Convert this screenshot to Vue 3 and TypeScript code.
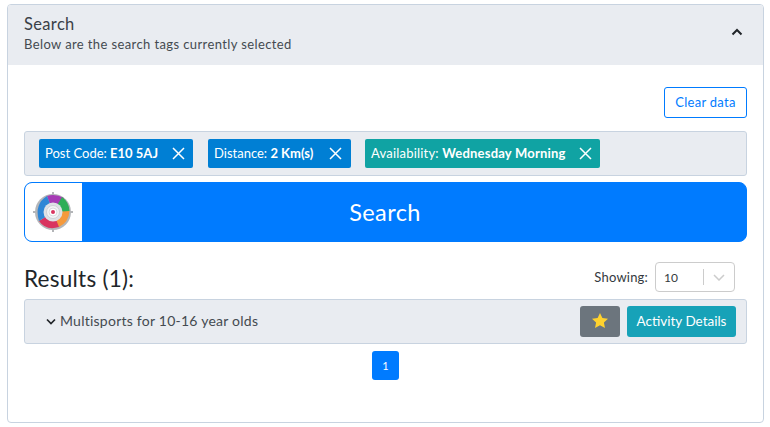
<script setup lang="ts">
interface Tag { label: string; value: string; kind: string }
const tags: Tag[] = [
  { label: 'Post Code:', value: 'E10 5AJ', kind: 'blue' },
  { label: 'Distance:', value: '2 Km(s)', kind: 'blue' },
  { label: 'Availability:', value: 'Wednesday Morning', kind: 'teal' },
]
</script>

<template>
  <div class="page">
    <section class="card">
      <header class="card-head">
        <div>
          <div class="title">Search</div>
          <div class="sub">Below are the search tags currently selected</div>
        </div>
        <svg class="chev-up" width="12" height="8" viewBox="0 0 12 8"><path d="M1.5 6.5 6 2l4.5 4.5" fill="none" stroke="#212529" stroke-width="2"/></svg>
      </header>
      <div class="card-body">
        <div class="actions"><button class="clear">Clear data</button></div>
        <div class="tags">
          <span v-for="t in tags" :key="t.label" class="tag" :class="t.kind">
            <span class="tag-text">{{ t.label }} <b>{{ t.value }}</b></span>
            <svg width="13" height="13" viewBox="0 0 13 13"><path d="M1 1l11 11M12 1 1 12" stroke="#fff" stroke-width="1.5" fill="none"/></svg>
          </span>
        </div>
        <button class="search">
          <span class="logo">
            <svg width="40" height="40" viewBox="0 0 40 40">
              <path d="M20 0v3M20 37v3M0 20h3M37 20h3" stroke="#9a9da1" stroke-width="1.500"/>
              <circle cx="20" cy="20" r="18" fill="#b4b6b9"/>
              <path d="M20 20 14 4Q22 1 31 6L26 18Z" fill="#a63bb5"/>
              <path d="M20 20 29 5Q36 10 36.500 19L24 24Z" fill="#2fae57"/>
              <path d="M20 20 36.500 19Q36 30 26 35L20 28Z" fill="#f59a3c"/>
              <path d="M20 20 26 35Q13 39 6 29L14 24Z" fill="#d9345f"/>
              <path d="M20 20 6 29Q1 12 14 4Z" fill="#2f86d6"/>
              <circle cx="20" cy="20" r="9.500" fill="#dfe1e6"/>
              <circle cx="20" cy="20" r="6.500" fill="#f3f4f6" stroke="#cfd1d5"/>
              <circle cx="20" cy="20" r="4" fill="#fff" stroke="#d8dade"/>
              <circle cx="20" cy="20" r="2" fill="#d9345f"/>
            </svg>
          </span>
          <span class="search-label">Search</span>
        </button>
        <div class="results-head">
          <h2>Results (1):</h2>
          <div class="showing">
            <span>Showing:</span>
            <div class="select">
              <span class="select-val">10</span>
              <i class="sep"></i>
              <svg width="12" height="7" viewBox="0 0 12 7"><path d="M1 1l5 5 5-5" fill="none" stroke="#ccc" stroke-width="1.500"/></svg>
            </div>
          </div>
        </div>
        <div class="row">
          <div class="row-name">
            <svg width="10" height="7" viewBox="0 0 10 7"><path d="M1 1.500 5 5.500l4-4" fill="none" stroke="#212529" stroke-width="1.700"/></svg>
            <span>Multisports for 10-16 year olds</span>
          </div>
          <div class="row-btns">
            <button class="star">
              <svg width="16" height="15" viewBox="0 0 16 15"><path d="M8 0l2.400 5 5.600.7-4.100 3.800 1.100 5.500L8 12.300 3 15l1.100-5.500L0 5.700 5.600 5z" fill="#ffd22e"/></svg>
            </button>
            <button class="details">Activity Details</button>
          </div>
        </div>
        <div class="pager"><span class="page-btn">1</span></div>
      </div>
    </section>
  </div>
</template>

<style>
html, body { margin: 0; background: #fff; }
</style>

<style scoped>
.page { width: 770px; height: 427px; box-sizing: border-box; padding: 4px 6px 4px 7px; font-family: "Lato", "Open Sans", sans-serif; color: #343a40; overflow: hidden; }
.card { box-sizing: border-box; height: 419px; border: 1px solid #c8d3e0; border-radius: 4px; overflow: hidden; background: #fff; }
.card-head { height: 60px; box-sizing: border-box; background: #e9ecf1; padding: 10px 20px 0 16px; display: flex; justify-content: space-between; align-items: flex-start; }
.title { font-size: 16.500px; line-height: 19px; color: #3a4047; letter-spacing: .35px; }
.sub { font-size: 13px; line-height: 20px; color: #444a50; letter-spacing: .39px; }
.chev-up { margin-top: 13px; }
.card-body { padding: 22px 16px 0; }
.actions { display: flex; justify-content: flex-end; height: 31px; margin-bottom: 13px; }
button { font-family: inherit; cursor: pointer; }
.clear { width: 83px; height: 31px; padding: 0 0 1px; background: #fff; border: 1px solid #007bff; border-radius: 3px; color: #007bff; font-size: 13px; letter-spacing: .28px; }
.tags { box-sizing: border-box; height: 45px; background: #e9ecf1; border: 1px solid #c8d3e0; border-radius: 3px; display: flex; align-items: center; gap: 15px; padding-left: 14px; }
.tag { box-sizing: border-box; height: 29px; display: flex; align-items: center; justify-content: space-between; padding: 0 8px 0 6px; border-radius: 2px; color: #fff; font-size: 13px; }
.tag:nth-child(1) { width: 154px; }
.tag:nth-child(2) { width: 143px; margin-right: -1px; padding-right: 9px; }
.tag:nth-child(3) { width: 235px; }
.tag:nth-child(3) .tag-text { letter-spacing: .2px; }
.tag b { font-weight: 700; }
.tag-text { white-space: nowrap; padding-bottom: 2px; }
.blue { background: #007fd4; }
.teal { background: #10a3a3; }
.search { margin-top: 6px; width: 100%; height: 60px; padding: 0; background: #007bff; border: 1px solid #007bff; border-radius: 8px; display: flex; align-items: stretch; overflow: hidden; color: #fff; }
.logo { width: 57px; background: #fff; display: flex; align-items: center; justify-content: center; flex: none; padding-right: 1px; box-sizing: border-box; }
.search-label { flex: 1; display: flex; align-items: center; justify-content: center; font-size: 23.500px; padding: 0 58px 0 0; letter-spacing: .4px; }
.results-head { display: flex; justify-content: space-between; height: 57px; box-sizing: border-box; padding-top: 20px; padding-right: 12px; }
h2 { margin: 0; font-weight: 400; font-size: 22.500px; line-height: 34px; color: #212529; letter-spacing: .25px; height: 28px; }
.showing { display: flex; align-items: center; gap: 7px; height: 30px; font-size: 13px; color: #343a40; letter-spacing: .2px; }
.select { box-sizing: border-box; width: 80px; height: 30px; border: 1px solid #ccc; border-radius: 4px; display: flex; align-items: center; padding: 0 9px 0 8px; font-size: 12px; letter-spacing: 0; }
.select-val { flex: 1; }
.sep { width: 1px; height: 16px; background: #ccc; margin-right: 9px; }
.row { box-sizing: border-box; height: 45px; background: #e9ecf1; border: 1px solid #c8d3e0; border-radius: 3px; display: flex; align-items: center; justify-content: space-between; padding: 0 10px 0 21px; }
.row-name { display: flex; align-items: center; gap: 4px; font-size: 14px; color: #444a50; letter-spacing: .24px; }
.row-name span { padding-bottom: 2px; }
.row-btns { display: flex; gap: 7px; }
.row-btns button { height: 31px; border: none; border-radius: 3px; padding: 0; }
.star { width: 40px; background: #6c757d; display: flex; align-items: center; justify-content: center; }
.star svg { margin-bottom: 2px; }
.details { width: 109px; background: #17a2b8; color: #fff; font-size: 13.500px; letter-spacing: 0; padding-bottom: 2px !important; }
.pager { display: flex; justify-content: center; margin-top: 7px; }
.page-btn { width: 27px; height: 29px; background: #007bff; color: #fff; border-radius: 3px; display: flex; align-items: center; justify-content: center; font-size: 11px; }
</style>
